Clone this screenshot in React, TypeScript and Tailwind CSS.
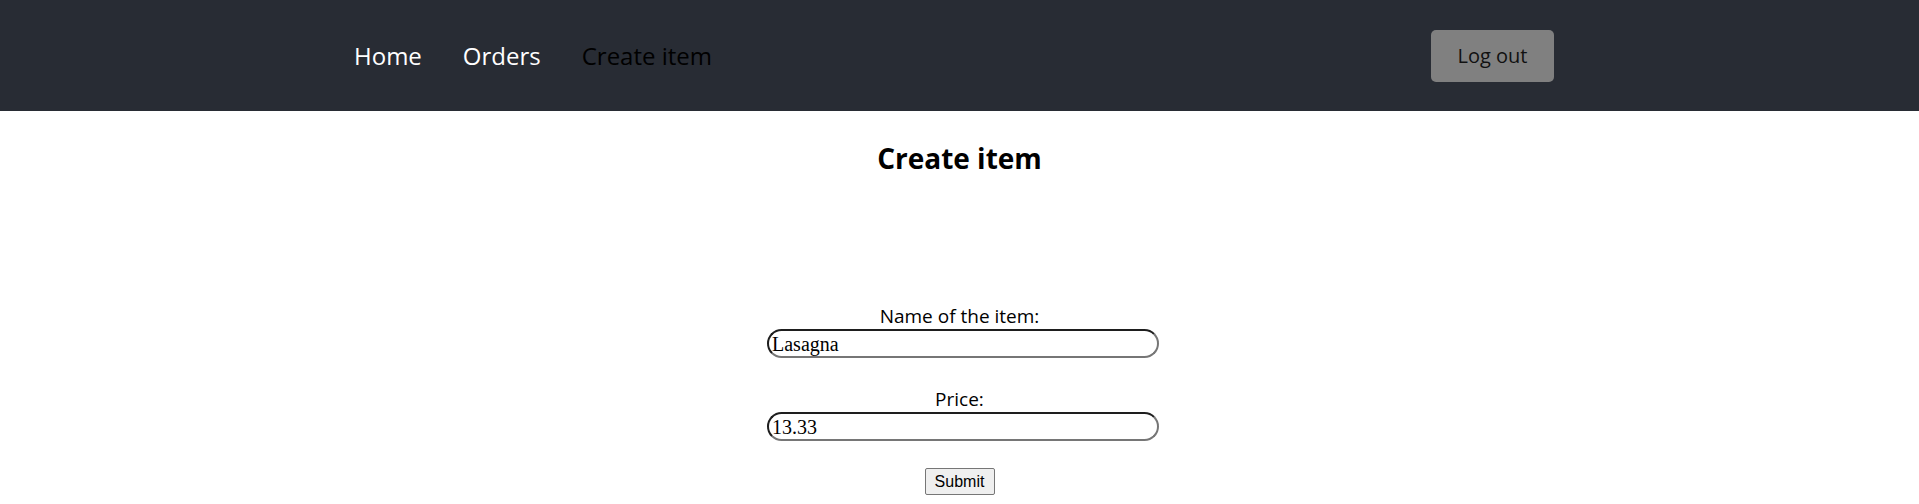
import React from "react";

export default function App() {
  const sans = { fontFamily: '"Open Sans", "Noto Sans", sans-serif' };
  return (
    <div className="min-h-[504px] bg-white" style={sans}>
      <header className="h-[111px] bg-[#282c34] flex items-center pl-[354px] pr-[365px]">
        <nav className="flex items-center gap-[41px] text-[24px]">
          <a className="text-white">Home</a>
          <a className="text-white">Orders</a>
          <a className="text-black">Create item</a>
        </nav>
        <div className="flex-1" />
        <button className="h-[52px] w-[123px] rounded-[5px] bg-[#808080] text-[20px] text-[#111]">
          Log out
        </button>
      </header>
      <main className="flex flex-col items-center">
        <h1 className="mt-[27px] text-[28px] font-bold leading-[40px] text-black">Create item</h1>
        <form className="mt-[127px] flex flex-col items-center">
          <label className="text-[19px] leading-[22px] text-black">Name of the item:</label>
          <input
            defaultValue="Lasagna"
            className="ml-[7px] mt-[2px] h-[29px] w-[392px] rounded-full border-2 border-t-[#1e1e1e] border-l-[#1e1e1e] border-b-[#767676] border-r-[#767676] px-[3px] text-[20px] text-black outline-none"
            style={{ fontFamily: '"Liberation Serif", serif' }}
          />
          <label className="mt-[30px] text-[19px] leading-[22px] text-black">Price:</label>
          <input
            defaultValue="13.33"
            className="ml-[7px] mt-[2px] h-[29px] w-[392px] rounded-full border-2 border-t-[#1e1e1e] border-l-[#1e1e1e] border-b-[#767676] border-r-[#767676] px-[3px] text-[20px] text-black outline-none"
            style={{ fontFamily: '"Liberation Serif", serif' }}
          />
          <button
            type="button"
            className="mt-[27px] h-[27px] w-[70px] rounded-[2px] border border-[#767676] bg-[#efefef] text-[16px] text-black"
            style={{ fontFamily: '"Liberation Sans", Arial, sans-serif' }}
          >
            Submit
          </button>
        </form>
      </main>
    </div>
  );
}
